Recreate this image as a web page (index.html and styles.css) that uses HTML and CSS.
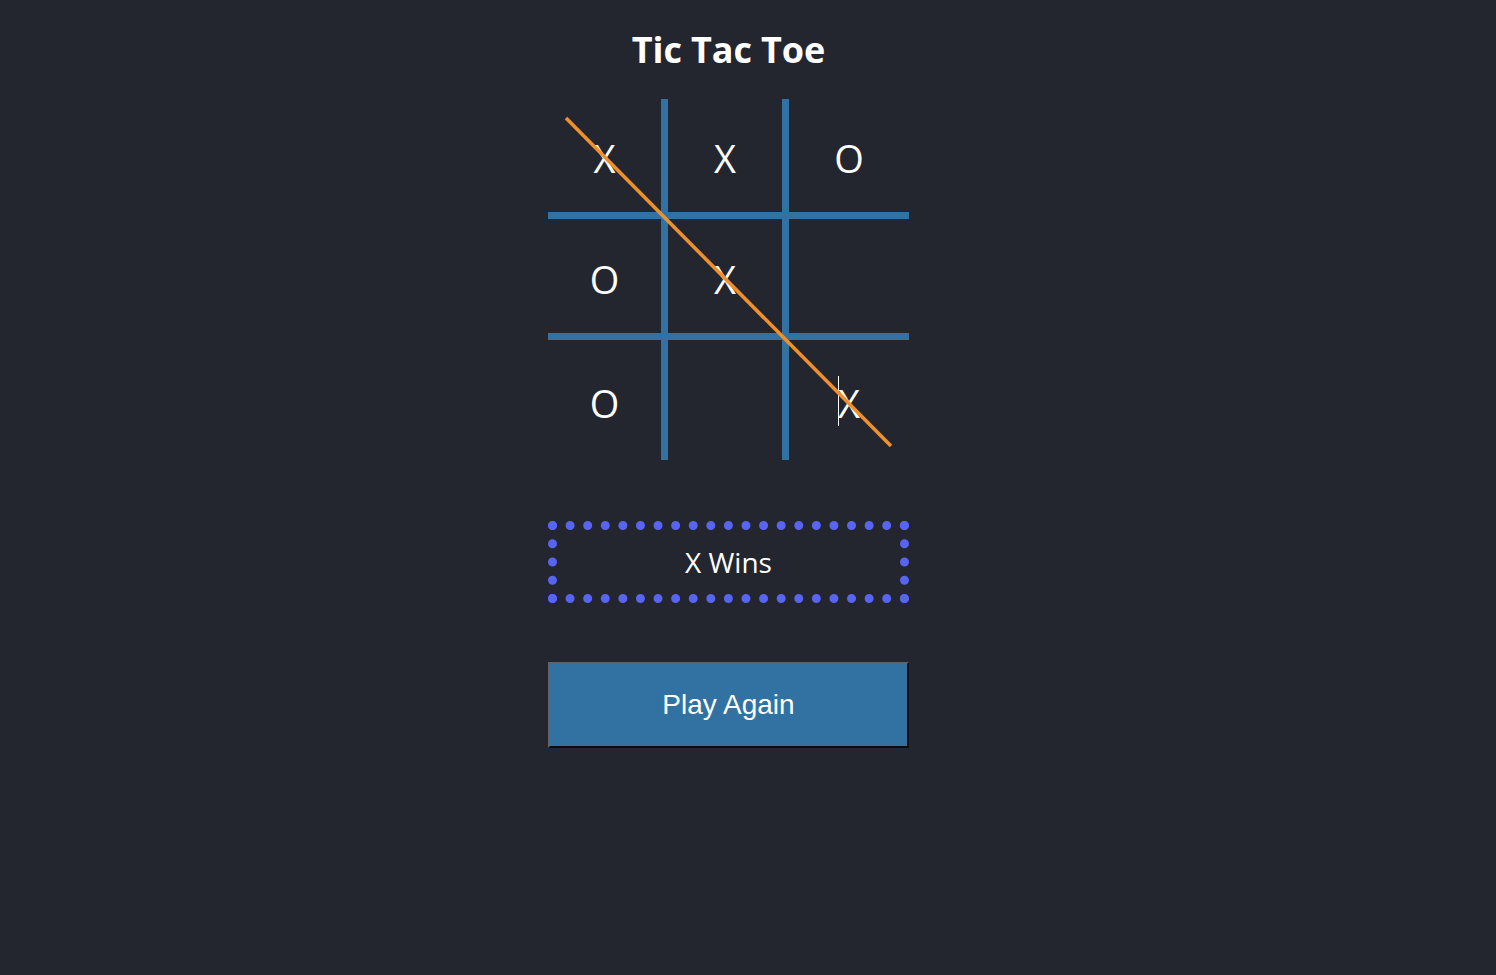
FILE: index.html
```html
<!DOCTYPE html>
<html lang="en">
<head>
<meta charset="utf-8">
<title>Tic Tac Toe</title>
<link rel="stylesheet" href="styles.css">
</head>
<body>
<main class="app">
  <h1 class="title">Tic Tac Toe</h1>
  <div class="board">
    <div class="cell">X</div>
    <div class="cell">X</div>
    <div class="cell">O</div>
    <div class="cell">O</div>
    <div class="cell">X</div>
    <div class="cell"></div>
    <div class="cell">O</div>
    <div class="cell"></div>
    <div class="cell"><span class="caret"></span>X</div>
    <svg class="strike" width="361" height="361" viewBox="0 0 361 361">
      <line x1="18" y1="19" x2="343" y2="347" stroke="#f0902c" stroke-width="3.6"/>
    </svg>
  </div>
  <div class="status">X Wins</div>
  <button class="reset" type="button">Play Again</button>
</main>
</body>
</html>
```

FILE: styles.css
```css
html, body {
  margin: 0;
  padding: 0;
  background: #23262f;
  height: 100%;
}

.app {
  width: 361px;
  margin: 0 0 0 548px;
  padding-top: 29px;
  display: flex;
  flex-direction: column;
  align-items: stretch;
  font-family: "Open Sans", "Noto Sans", sans-serif;
  color: #ffffff;
}

.title {
  margin: 0;
  font-size: 36px;
  line-height: 42px;
  font-weight: 700;
  text-align: center;
  letter-spacing: -0.1px;
}

.board {
  position: relative;
  margin-top: 28px;
  display: grid;
  grid-template-columns: 113px 114px 120px;
  grid-template-rows: 113px 114px 120px;
  gap: 7px;
  background: #3272a3;
}

.cell {
  background: #23262f;
  display: flex;
  align-items: center;
  justify-content: center;
  padding-top: 5px;
  box-sizing: border-box;
  font-size: 38px;
  font-weight: 400;
  color: #ffffff;
}

.caret {
  display: inline-block;
  width: 1px;
  height: 50px;
  background: #ffffff;
  margin-right: -1px;
  margin-top: -4px;
}

.strike {
  position: absolute;
  left: 0;
  top: 0;
  pointer-events: none;
}

.status {
  margin-top: 61px;
  height: 82px;
  box-sizing: border-box;
  border: 9px dotted #5865f2;
  display: flex;
  align-items: center;
  justify-content: center;
  font-size: 28px;
  color: #ffffff;
}

.reset {
  margin-top: 59px;
  height: 86px;
  width: 361px;
  box-sizing: border-box;
  background: #3272a2;
  border-style: solid;
  border-width: 2px;
  border-color: #5f636a #0c0d10 #0c0d10 #5f636a;
  color: #ffffff;
  font-family: "Liberation Sans", Arial, sans-serif;
  font-size: 28px;
  padding: 0;
}
```
